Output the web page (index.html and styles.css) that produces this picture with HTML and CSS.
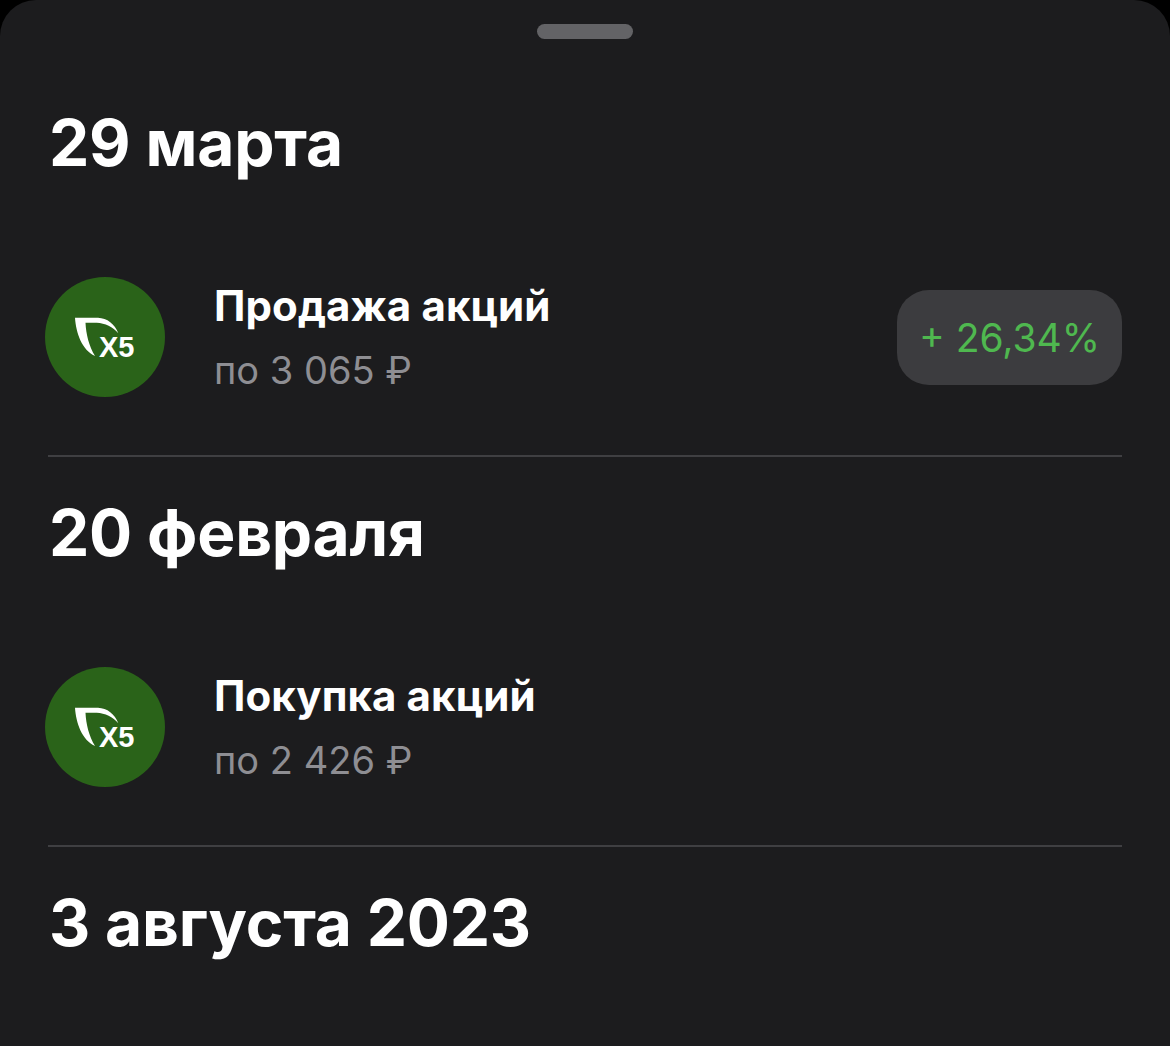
FILE: index.html
```html
<!DOCTYPE html>
<html lang="ru">
<head>
    <meta charset="UTF-8">
    <meta name="viewport" content="width=device-width, initial-scale=1.0">
    <title>Операции</title>
    <link rel="stylesheet" href="styles.css">
</head>
<body>
    <div class="sheet">
        <div class="handle"></div>

        <section class="group">
            <h2 class="date">29 марта</h2>
            <div class="row">
                <div class="avatar">
                    <svg viewBox="0 0 120 120" width="120" height="120">
                        <path class="leaf" d="M30 40.7H53C62 41 70 47 73.3 56.3C68 50 60 46 51.7 45.7H40.5C41 57 44 69 50 79C37 73 31 56 30 40.7Z"/>
                        <text class="logo-text" x="54" y="79.5">X5</text>
                    </svg>
                </div>
                <div class="info">
                    <div class="title">Продажа акций</div>
                    <div class="sub">по 3 065 ₽</div>
                </div>
                <div class="pill">+ 26,34%</div>
            </div>
        </section>

        <section class="group">
            <h2 class="date">20 февраля</h2>
            <div class="row">
                <div class="avatar">
                    <svg viewBox="0 0 120 120" width="120" height="120">
                        <path class="leaf" d="M30 40.7H53C62 41 70 47 73.3 56.3C68 50 60 46 51.7 45.7H40.5C41 57 44 69 50 79C37 73 31 56 30 40.7Z"/>
                        <text class="logo-text" x="54" y="79.5">X5</text>
                    </svg>
                </div>
                <div class="info">
                    <div class="title">Покупка акций</div>
                    <div class="sub">по 2 426 ₽</div>
                </div>
            </div>
        </section>

        <section class="group last">
            <h2 class="date">3 августа 2023</h2>
        </section>
    </div>
</body>
</html>
```

FILE: styles.css
```css
html, body {
    margin: 0;
    height: 100%;
}

body {
    background: #000;
    font-family: Inter, "Noto Sans", sans-serif;
    overflow: hidden;
}

.sheet {
    background: #1c1c1e;
    border-radius: 36px 36px 0 0;
    height: 1046px;
    padding: 24px 48px 0 45px;
    box-sizing: border-box;
}

.handle {
    width: 96px;
    height: 15px;
    margin: 0 auto 0 492px;
    background: #636366;
    border-radius: 8px;
}

.group {
    height: 390px;
    box-sizing: border-box;
    border-bottom: 2px solid #3f3f42;
    margin-left: 3px;
}

.group:first-of-type {
    height: 418px;
    padding-top: 68px;
}

.group + .group {
    padding-top: 40px;
}

.group.last {
    height: auto;
    border-bottom: none;
}

.date {
    margin: 0 0 0 1px;
    height: 72px;
    line-height: 72px;
    font-size: 64px;
    font-weight: 700;
    letter-spacing: -0.2px;
    color: #fff;
}

.row {
    display: flex;
    align-items: center;
    margin: 98px 0 0 -3px;
}

.avatar {
    width: 120px;
    height: 120px;
    border-radius: 50%;
    background: #2a6319;
    flex-shrink: 0;
}

.leaf {
    fill: #fff;
}

.logo-text {
    font-family: "Liberation Sans", Arial, sans-serif;
    font-size: 29px;
    font-weight: 700;
    fill: #fff;
}

.info {
    flex: 1;
    margin-left: 49px;
}

.title {
    font-size: 42px;
    line-height: 48px;
    font-weight: 700;
    letter-spacing: 0.1px;
    color: #fff;
}

.sub {
    margin-top: 18px;
    font-size: 38px;
    line-height: 44px;
    color: #8e8e93;
}

.pill {
    background: #3c3c3f;
    color: #4fb84f;
    font-size: 39px;
    line-height: 95px;
    height: 95px;
    width: 225px;
    text-align: center;
    border-radius: 32px;
}
```
